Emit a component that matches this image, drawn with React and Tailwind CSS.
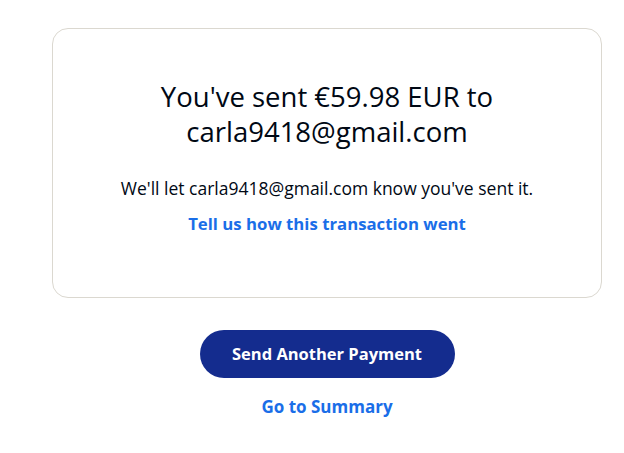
import React from 'react';

export default function App() {
  return (
    <div className="min-h-[453px] w-full bg-white text-[#000000]" style={{ fontFamily: '"Open Sans", "Noto Sans", sans-serif' }}>
      <div className="pt-[28px] px-[52px] w-[654px]">
        <div className="w-[550px] h-[270px] border border-[#dbd8d0] rounded-[16px] flex flex-col items-center pt-[50px]">
          <h1 className="text-[27.5px] leading-[35px] text-center text-[#000814] font-normal">
            You've sent €59.98 EUR to<br />carla9418@gmail.com
          </h1>
          <p className="mt-[27px] text-[17.5px] leading-[24px] text-[#000814]">We'll let carla9418@gmail.com know you've sent it.</p>
          <a href="#" className="mt-[12px] text-[16.75px] leading-[24px] font-bold text-[#1a6ee8]">Tell us how this transaction went</a>
        </div>
      </div>
      <div className="flex flex-col items-center w-[654px]">
        <button className="mt-[32px] w-[255px] h-[48px] rounded-full bg-[#142c8e] text-white font-bold text-[16.5px]">Send Another Payment</button>
        <a href="#" className="mt-[17px] text-[17px] leading-[24px] font-bold text-[#1a6ee8]">Go to Summary</a>
      </div>
    </div>
  );
}
